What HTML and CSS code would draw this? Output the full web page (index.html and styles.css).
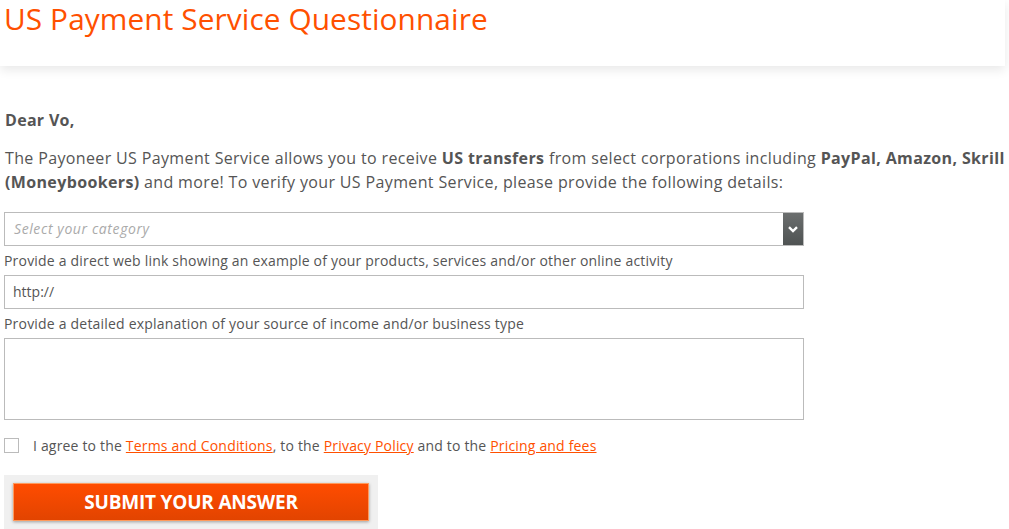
FILE: index.html
```html
<!DOCTYPE html>
<html lang="en">
<head>
<meta charset="utf-8">
<title>US Payment Service Questionnaire</title>
<link rel="stylesheet" href="styles.css">
</head>
<body>
<header class="top">
  <h1 class="title">US Payment Service Questionnaire</h1>
</header>
<main class="content">
  <p class="greet">Dear Vo,</p>
  <p class="intro">The Payoneer US Payment Service allows you to receive <b>US transfers</b> from select corporations including <b>PayPal, Amazon, Skrill (Moneybookers)</b> and more! To verify your US Payment Service, please provide the following details:</p>
  <form class="form">
    <div class="select">
      <span class="select-text">Select your category</span>
      <span class="select-arrow">
        <svg width="10" height="7" viewBox="0 0 10 7"><path d="M1 1.2 L5 5 L9 1.2" fill="none" stroke="#fff" stroke-width="2.4"/></svg>
      </span>
    </div>
    <label class="label">Provide a direct web link showing an example of your products, services and/or other online activity</label>
    <div class="field">http://</div>
    <label class="label">Provide a detailed explanation of your source of income and/or business type</label>
    <div class="area"></div>
    <div class="agree">
      <span class="box"></span>
      <span class="agree-text">I agree to the <a href="#">Terms and Conditions</a>, to the <a href="#">Privacy Policy</a> and to the <a href="#">Pricing and fees</a></span>
    </div>
    <div class="submit-wrap">
      <button type="button" class="submit">SUBMIT YOUR ANSWER</button>
    </div>
  </form>
</main>
</body>
</html>
```

FILE: styles.css
```css
html, body {
  margin: 0;
  padding: 0;
  background: #fff;
  overflow: hidden;
}
body {
  font-family: "Open Sans", "Liberation Sans", sans-serif;
  color: #555;
  width: 1009px;
  height: 529px;
}
.top {
  height: 66px;
  box-shadow: 0 4px 10px rgba(0, 0, 0, 0.09);
  margin-right: 4px;
  position: relative;
}
.title {
  margin: 0;
  padding: 0 0 0 4px;
  font-weight: 400;
  font-size: 29.8px;
  line-height: 38px;
  letter-spacing: 0.1px;
  color: #ff5000;
}
.content {
  padding: 0 0 0 5px;
}
.greet {
  margin: 42px 0 0;
  font-weight: 700;
  font-size: 16px;
  line-height: 24px;
  letter-spacing: 0.3px;
}
.intro {
  margin: 14px 0 0;
  font-size: 16px;
  line-height: 24px;
  letter-spacing: 0.36px;
  width: 1004px;
}
.intro b { font-weight: 700; }
.form {
  margin-top: 18px;
  width: 800px;
  margin-left: -1px;
}
.select {
  display: flex;
  height: 32px;
  border: 1px solid #bbb;
  background: #fff;
}
.select-text {
  flex: 1;
  font-size: 14px;
  font-style: italic;
  color: #aaa;
  line-height: 32px;
  padding-left: 9px;
  letter-spacing: 0.6px;
}
.select-arrow {
  width: 20px;
  display: flex;
  align-items: center;
  justify-content: center;
  background: linear-gradient(#6b6e6e, #4f5353);
}
.label {
  display: block;
  font-size: 14px;
  line-height: 20px;
  letter-spacing: 0.2px;
  margin: 5px 0 4px;
}
.field {
  height: 32px;
  border: 1px solid #bbb;
  font-size: 14px;
  line-height: 32px;
  padding-left: 8px;
  color: #555;
}
.area {
  height: 80px;
  border: 1px solid #bbb;
}
.agree {
  display: flex;
  align-items: center;
  margin-top: 16px;
  font-size: 14px;
  letter-spacing: 0.18px;
}
.box {
  width: 13px;
  height: 13px;
  border: 1px solid #bbb;
  margin-right: 14px;
}
.agree-text a {
  color: #ff5000;
  text-decoration: underline;
}
.submit-wrap {
  margin-top: 20px;
  width: 356px;
  padding: 8px 9px 8px 9px;
  background: #f0f0f0;
}
.submit {
  display: block;
  width: 356px;
  height: 38px;
  border: 1px solid #ff9a5c;
  background: linear-gradient(#ff4c00, #e24400);
  color: #fff;
  font-family: "Open Sans", "Liberation Sans", sans-serif;
  font-weight: 700;
  font-size: 19px;
  letter-spacing: -0.2px;
  box-shadow: 0 1px 3px rgba(0, 0, 0, 0.35);
  padding: 0;
  cursor: pointer;
}
```
